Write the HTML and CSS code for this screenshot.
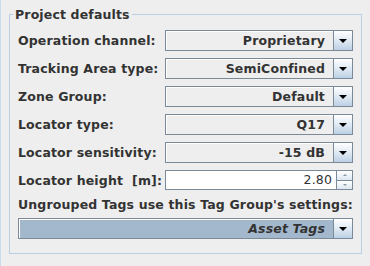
FILE: index.html
```html
<!DOCTYPE html>
<html lang="en">
<head>
    <meta charset="UTF-8">
    <title>Project defaults</title>
    <link rel="stylesheet" href="styles.css">
</head>
<body>
    <div class="window">
        <fieldset class="group">
            <legend>Project defaults</legend>
            <div class="form-grid">
                <label>Operation channel:</label>
                <div class="combo"><span class="combo-value">Proprietary</span><span class="combo-btn"><i class="arrow"></i></span></div>

                <label>Tracking Area type:</label>
                <div class="combo"><span class="combo-value">SemiConfined</span><span class="combo-btn"><i class="arrow"></i></span></div>

                <label>Zone Group:</label>
                <div class="combo"><span class="combo-value">Default</span><span class="combo-btn"><i class="arrow"></i></span></div>

                <label>Locator type:</label>
                <div class="combo"><span class="combo-value">Q17</span><span class="combo-btn"><i class="arrow"></i></span></div>

                <label>Locator sensitivity:</label>
                <div class="combo"><span class="combo-value">-15 dB</span><span class="combo-btn"><i class="arrow"></i></span></div>

                <label>Locator height&nbsp; [m]:</label>
                <div class="spinner">
                    <span class="spinner-value">2.80</span>
                    <span class="spinner-btns">
                        <span class="spin-btn"><i class="tiny-up"></i></span>
                        <span class="spin-btn"><i class="tiny-down"></i></span>
                    </span>
                </div>
            </div>
            <div class="wide-label">Ungrouped Tags use this Tag Group's settings:</div>
            <div class="combo combo-selected"><span class="combo-value">Asset Tags</span><span class="combo-btn"><i class="arrow"></i></span></div>
        </fieldset>
    </div>
</body>
</html>
```

FILE: styles.css
```css
/* Look of a Swing Metal panel */
body {
    margin: 0;
    background-color: #eeeeee;
    font-family: "DejaVu Sans", sans-serif;
    font-size: 12.5px;
    letter-spacing: 0.15px;
    font-weight: bold;
    color: #333333;
}
.window {
    border-left: 1px solid #c8dcee;
    height: 266px;
    box-sizing: border-box;
    padding-top: 7px;
}
.group {
    margin: 0 8px 0 8px;
    padding: 8px 8px 14px 8px;
    border: 1px solid #b8cfe5;
    min-width: 0;
}
.group legend {
    padding: 0 2px;
    margin-left: -5px;
    line-height: 15px;
    color: #333333;
}
.form-grid {
    display: grid;
    grid-template-columns: 147px 1fr;
    row-gap: 7px;
    align-items: center;
}
.form-grid label {
    line-height: 15px;
    white-space: nowrap;
}
.combo {
    display: flex;
    height: 21px;
    box-sizing: border-box;
    border: 1px solid #7a8a99;
}
.combo-value {
    flex: 1;
    background-color: #eeeeee;
    box-shadow: inset 1px 1px 0 #ffffff;
    text-align: right;
    padding-right: 8px;
    line-height: 19px;
}
.combo-btn {
    width: 18px;
    border-left: 1px solid #7a8a99;
    background: linear-gradient(#ffffff, #dce7f2 55%, #bcd0e4);
    display: flex;
    align-items: center;
    justify-content: center;
}
.arrow {
    width: 0;
    height: 0;
    border-left: 4px solid transparent;
    border-right: 4px solid transparent;
    border-top: 4px solid #000000;
}
.combo-selected .combo-value {
    background-color: #a3b8cc;
    font-style: italic;
}
.spinner {
    display: flex;
    height: 20px;
    box-sizing: border-box;
}
.spinner-value {
    flex: 1;
    background-color: #ffffff;
    border: 1px solid #7a8a99;
    text-align: right;
    padding-right: 4px;
    font-weight: normal;
    line-height: 18px;
}
.spinner-btns {
    width: 16px;
    display: flex;
    flex-direction: column;
}
.spin-btn {
    flex: 1;
    border: 1px solid #7a8a99;
    border-left: none;
    background: linear-gradient(#ffffff, #dce7f2);
    display: flex;
    align-items: center;
    justify-content: center;
}
.spin-btn + .spin-btn {
    border-top: none;
}
.tiny-up {
    border-left: 2px solid transparent;
    border-right: 2px solid transparent;
    border-bottom: 2px solid #8a98a6;
}
.tiny-down {
    border-left: 2px solid transparent;
    border-right: 2px solid transparent;
    border-top: 2px solid #8a98a6;
}
.wide-label {
    margin: 7px 0 6px;
    line-height: 15px;
    white-space: nowrap;
}
```
